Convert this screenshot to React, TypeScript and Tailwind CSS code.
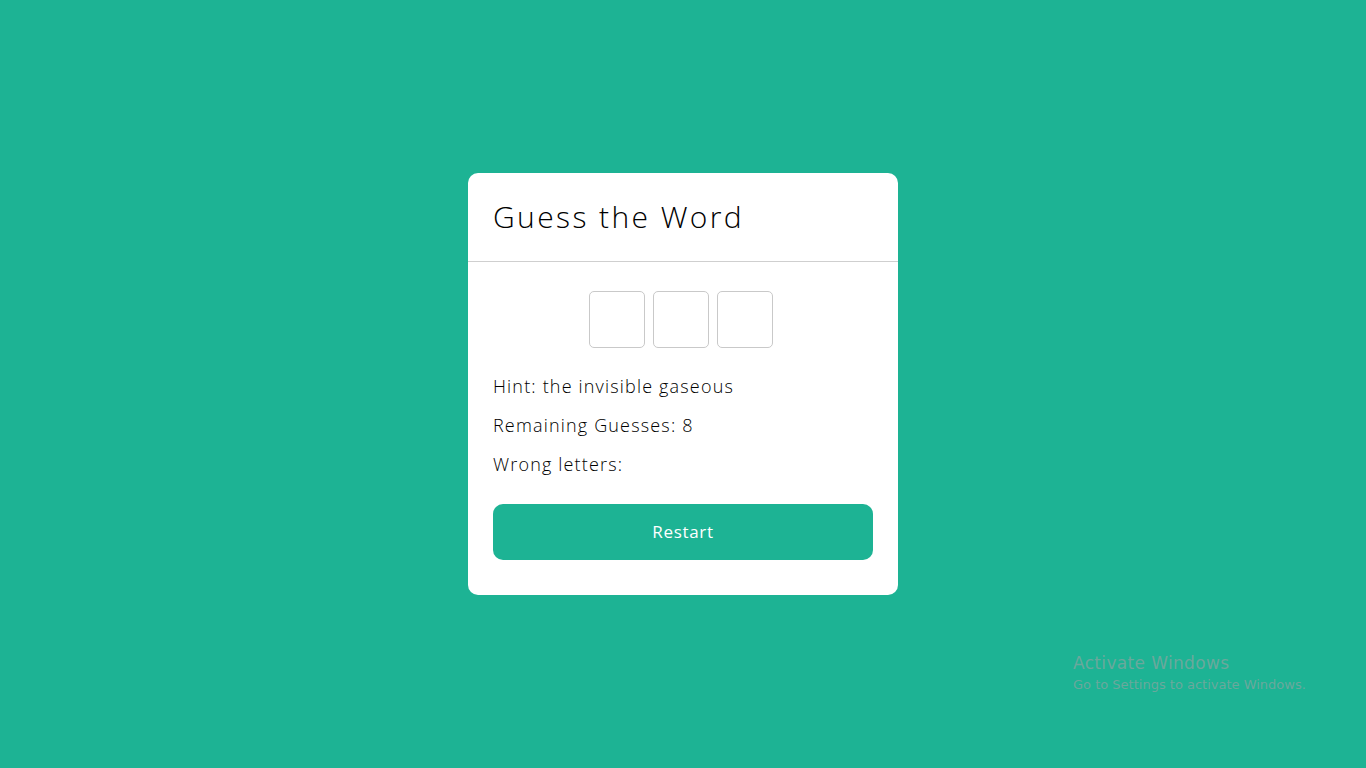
import React from 'react';

const App: React.FC = () => {
  const slots = ['', '', ''];

  return (
    <div className="relative min-h-screen w-full bg-[#1db394] flex items-center justify-center font-['Open_Sans',sans-serif]">
      <div className="w-[430px] bg-white rounded-[10px]">
        <div className="px-[25px] py-[20px] border-b border-[#cfcfcf]">
          <h1 className="text-[30px] leading-[48px] font-light text-black tracking-[0.08em]">Guess the Word</h1>
        </div>
        <div className="px-[25px] pt-[29px] pb-[35px] flex flex-col">
          <div className="flex justify-center gap-2 pr-[4px]">
            {slots.map((s, i) => (
              <div key={i} className="w-[56px] h-[57px] border border-[#c9c9c9] rounded-[5px]">{s}</div>
            ))}
          </div>
          <div className="mt-[25px] flex flex-col gap-[12px] text-[18px] leading-[27px] font-light text-black tracking-[0.065em]">
            <p>Hint: the invisible gaseous</p>
            <p>Remaining Guesses: 8</p>
            <p>Wrong letters:</p>
          </div>
          <button className="mt-[26px] h-[56px] w-full rounded-[10px] bg-[#1db394] text-white text-[17px] tracking-[0.04em]">
            Restart
          </button>
        </div>
      </div>
      <div className="absolute left-[1073px] top-[651px] text-[#6aa89c] font-['DejaVu_Sans',sans-serif]">
        <div className="text-[17px] leading-[24px] tracking-[0.02em]">Activate Windows</div>
        <div className="text-[13px] leading-[20px]">Go to Settings to activate Windows.</div>
      </div>
    </div>
  );
};

export default App;
